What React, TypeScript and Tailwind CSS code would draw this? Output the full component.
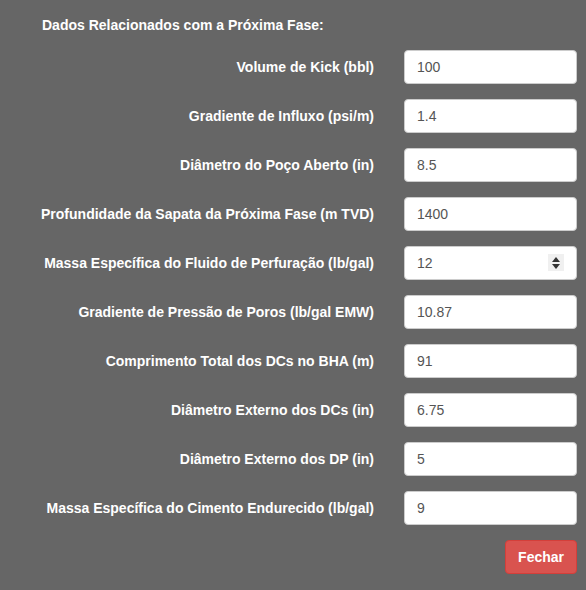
import React from "react";

const rows: { label: string; value: string; spinner?: boolean }[] = [
  { label: "Volume de Kick (bbl)", value: "100" },
  { label: "Gradiente de Influxo (psi/m)", value: "1.4" },
  { label: "Diâmetro do Poço Aberto (in)", value: "8.5" },
  { label: "Profundidade da Sapata da Próxima Fase (m TVD)", value: "1400" },
  { label: "Massa Específica do Fluido de Perfuração (lb/gal)", value: "12", spinner: true },
  { label: "Gradiente de Pressão de Poros (lb/gal EMW)", value: "10.87" },
  { label: "Comprimento Total dos DCs no BHA (m)", value: "91" },
  { label: "Diâmetro Externo dos DCs (in)", value: "6.75" },
  { label: "Diâmetro Externo dos DP (in)", value: "5" },
  { label: "Massa Específica do Cimento Endurecido (lb/gal)", value: "9" },
];

export default function App() {
  return (
    <div
      className="w-full min-h-screen bg-[#666666] text-[14px]"
      style={{ fontFamily: '"Liberation Sans", Arial, sans-serif' }}
    >
      <div className="pt-[15px] pl-[42px] leading-[20px] font-bold text-white">
        Dados Relacionados com a Próxima Fase:
      </div>
      <div className="mt-[15px] flex flex-col gap-[15px]">
        {rows.map((r) => (
          <div key={r.label} className="flex items-start">
            <div className="w-[374px] pt-[7px] text-right font-bold leading-[20px] text-white">
              {r.label}
            </div>
            <div className="relative ml-[30px] w-[173px]">
              <div className="flex h-[34px] w-full items-center rounded-[4px] border border-[#cccccc] bg-white px-[12px] text-[#555555] leading-[20px]">
                {r.value}
              </div>
              {r.spinner && (
                <div className="absolute left-[144px] top-[8px] flex h-[17px] w-[16px] flex-col items-center justify-center gap-[2px] bg-[#f0f0f0]">
                  <svg width="8" height="5" viewBox="0 0 8 5">
                    <polygon points="4,0 8,5 0,5" fill="#333" />
                  </svg>
                  <svg width="8" height="5" viewBox="0 0 8 5">
                    <polygon points="0,0 8,0 4,5" fill="#333" />
                  </svg>
                </div>
              )}
            </div>
          </div>
        ))}
      </div>
      <div className="mt-[15px] flex w-[577px] justify-end">
        <button className="h-[34px] rounded-[4px] border border-[#d43f3a] bg-[#d9534f] px-[12px] font-bold leading-[20px] text-white">
          Fechar
        </button>
      </div>
    </div>
  );
}
